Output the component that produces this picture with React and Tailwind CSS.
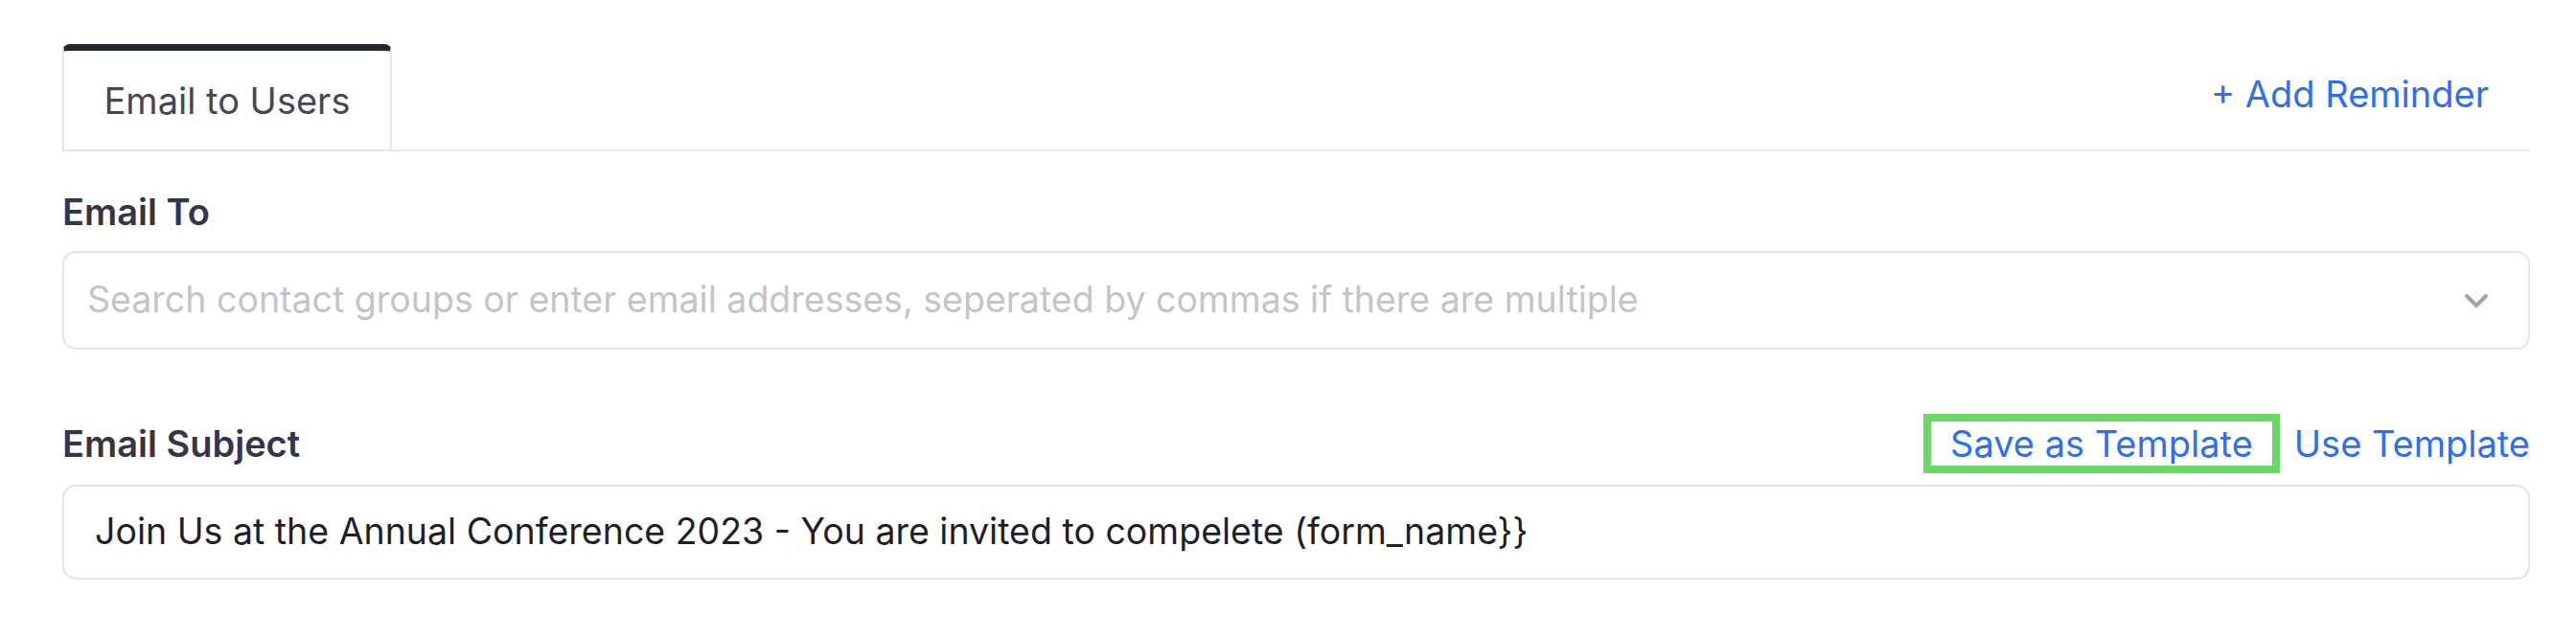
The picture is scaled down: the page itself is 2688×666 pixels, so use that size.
import { ChevronDown } from "lucide-react";

function App() {
  return (
    <div className="min-h-screen w-full bg-white font-['Inter',sans-serif]">
      <div className="ml-[65px] w-[2575px] pt-[46px]">
        {/* tabs */}
        <div className="flex items-center justify-between border-b-2 border-[#e6e8ee]">
          <div className="-mb-[2px] flex h-[112px] w-[344px] items-center justify-center rounded-t-[8px] border-2 border-t-[7px] border-[#e3e4e8] border-t-[#222733] bg-white pt-[2px] text-[38px] text-[#434852]">
            Email to Users
          </div>
          <button className="mr-[43px] mb-[6px] text-[38px] leading-[46px] text-[#2f6feb]">+ Add Reminder</button>
        </div>

        {/* email to */}
        <div className="mt-[40px]">
          <label className="block text-[38px] font-semibold leading-[46px] text-[#34344a]">Email To</label>
          <div className="mt-[18px] flex h-[103px] items-center justify-between rounded-[14px] border-2 border-[#e3e4e9] pl-[24px] pr-[34px]">
            <span className="text-[37.5px] text-[#c3c4cb]">
              Search contact groups or enter email addresses, seperated by commas if there are multiple
            </span>
            <ChevronDown className="h-[40px] w-[40px] text-[#a2a5ad]" strokeWidth={2.5} />
          </div>
        </div>

        {/* email subject */}
        <div className="mt-[67px]">
          <div className="flex items-center justify-between">
            <label className="text-[38px] font-semibold leading-[46px] text-[#34344a]">Email Subject</label>
            <div className="flex items-center gap-[15px]">
              <button className="flex h-[62px] items-center border-[8px] border-[#6ad865] px-[20px] text-[38px] text-[#2f6feb]">
                Save as Template
              </button>
              <button className="text-[38px] text-[#2f6feb]">Use Template</button>
            </div>
          </div>
          <div className="mt-[12px] flex h-[99px] items-center rounded-[14px] border-2 border-[#e3e4e9] pl-[32px]">
            <span className="text-[37.5px] text-[#1f1f29]">
              Join Us at the Annual Conference 2023 - You are invited to compelete (form_name}}
            </span>
          </div>
        </div>
      </div>
    </div>
  );
}

export default App;
